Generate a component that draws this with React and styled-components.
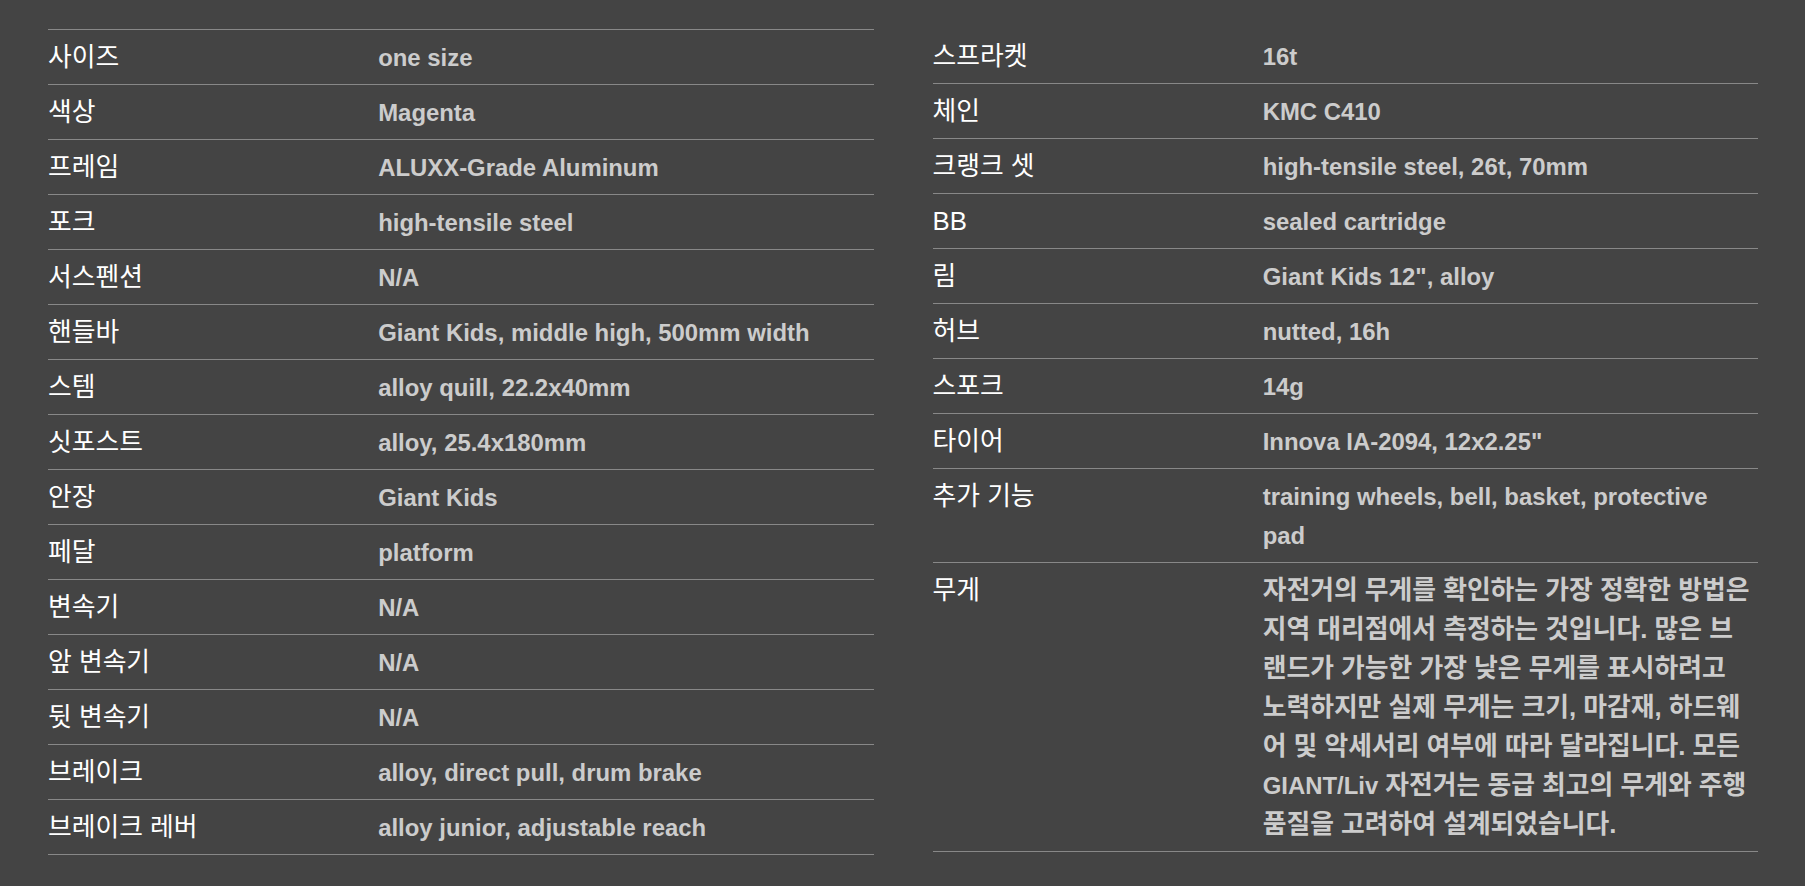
import React from "react";
import styled, { createGlobalStyle } from "styled-components";

const GlobalStyle = createGlobalStyle`
  html, body {
    margin: 0;
    padding: 0;
    background: #444444;
  }
  body {
    font-family: "Liberation Sans", "Noto Sans CJK KR", sans-serif;
  }
`;

const Page = styled.div`
  min-height: 886px;
  box-sizing: border-box;
  padding: 29px 47px 0 48px;
  display: grid;
  grid-template-columns: 1fr 1fr;
  column-gap: 59px;
  align-items: start;
`;

const SpecList = styled.dl`
  margin: 0;
  border-top: ${(p) => (p.$topBorder ? "1px solid #888888" : "none")};
`;

const Row = styled.div`
  display: grid;
  grid-template-columns: 40% 60%;
  padding: 7.5px 0;
  border-bottom: 1px solid #888888;
  font-size: 23.9px;
  line-height: 39px;
`;

const Label = styled.dt`
  margin: 0;
  color: #ffffff;
  font-weight: 400;
  font-family: "Liberation Sans", "Noto Sans CJK KR", sans-serif;
  font-size: 25.8px;
`;

const Value = styled.dd`
  margin: 0;
  color: #cccccc;
  font-weight: 700;
  font-family: "Liberation Sans", "Noto Sans CJK KR", sans-serif;
  font-size: ${(p) => (p.$ko ? "25.8px" : "inherit")};
`;

const Latin = styled.span`
  font-size: 23.9px;
`;

const left = [
  ["사이즈", "one size"],
  ["색상", "Magenta"],
  ["프레임", "ALUXX-Grade Aluminum"],
  ["포크", "high-tensile steel"],
  ["서스펜션", "N/A"],
  ["핸들바", "Giant Kids, middle high, 500mm width"],
  ["스템", "alloy quill, 22.2x40mm"],
  ["싯포스트", "alloy, 25.4x180mm"],
  ["안장", "Giant Kids"],
  ["페달", "platform"],
  ["변속기", "N/A"],
  ["앞 변속기", "N/A"],
  ["뒷 변속기", "N/A"],
  ["브레이크", "alloy, direct pull, drum brake"],
  ["브레이크 레버", "alloy junior, adjustable reach"],
];

const right = [
  ["스프라켓", ["16t"]],
  ["체인", ["KMC C410"]],
  ["크랭크 셋", ["high-tensile steel, 26t, 70mm"]],
  ["BB", ["sealed cartridge"]],
  ["림", ['Giant Kids 12", alloy']],
  ["허브", ["nutted, 16h"]],
  ["스포크", ["14g"]],
  ["타이어", ['Innova IA-2094, 12x2.25"']],
  ["추가 기능", ["training wheels, bell, basket, protective", "pad"]],
  [
    "무게",
    [
      "자전거의 무게를 확인하는 가장 정확한 방법은",
      "지역 대리점에서 측정하는 것입니다. 많은 브",
      "랜드가 가능한 가장 낮은 무게를 표시하려고",
      "노력하지만 실제 무게는 크기, 마감재, 하드웨",
      "어 및 악세서리 여부에 따라 달라집니다. 모든",
      <>
        <Latin>GIANT/Liv</Latin> 자전거는 동급 최고의 무게와 주행
      </>,
      "품질을 고려하여 설계되었습니다.",
    ],
    true,
  ],
];

const Line = styled.span`
  display: block;
  white-space: nowrap;
`;

export default function App() {
  return (
    <>
      <GlobalStyle />
      <Page>
        <SpecList $topBorder>
          {left.map(([k, v]) => (
            <Row key={k}>
              <Label>{k}</Label>
              <Value>{v}</Value>
            </Row>
          ))}
        </SpecList>
        <SpecList>
          {right.map(([k, lines, ko]) => (
            <Row key={k}>
              <Label>{k}</Label>
              <Value $ko={ko}>
                {lines.map((l, i) => (
                  <Line key={i}>{l}</Line>
                ))}
              </Value>
            </Row>
          ))}
        </SpecList>
      </Page>
    </>
  );
}
